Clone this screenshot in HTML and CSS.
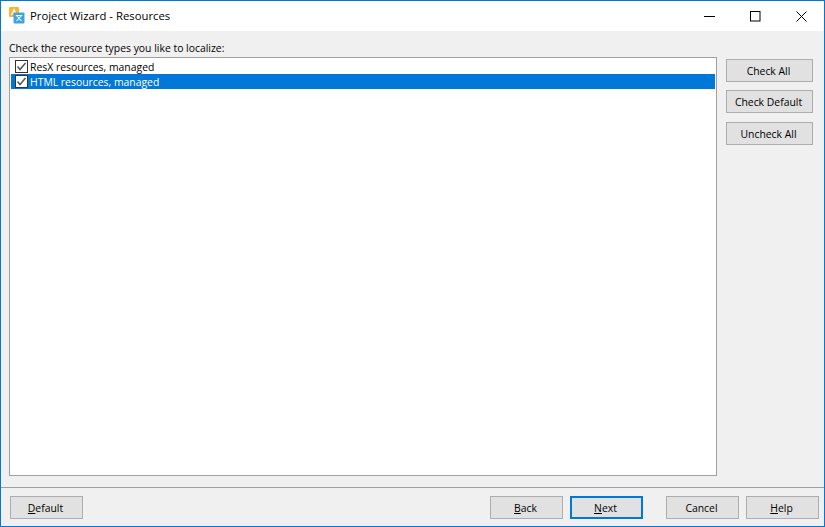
FILE: index.html
```html
<!DOCTYPE html>
<html lang="en">
<head>
<meta charset="utf-8">
<title>Project Wizard - Resources</title>
<link rel="stylesheet" href="styles.css">
</head>
<body>
<div class="window">
  <header class="titlebar">
    <svg class="app-icon" width="16" height="17" viewBox="0 0 16 17">
      <rect x="0" y="0" width="10" height="10" rx="1" fill="#f5b731"/>
      <path d="M2.5 8 L5 2.5 L7.5 8 M3.5 6 H6.5" fill="none" stroke="#fff" stroke-width="1.1"/>
      <rect x="4.5" y="5.5" width="11" height="11" rx="1" fill="#3fa3e8"/>
      <path d="M7.5 8.5 L12.5 14 M12.5 8.5 L7.5 14 M6.8 8.5 H13.2" fill="none" stroke="#fff" stroke-width="1.1"/>
    </svg>
    <span class="title">Project Wizard - Resources</span>
    <div class="caption">
      <span class="cap-btn"><svg width="11" height="11" viewBox="0 0 11 11"><path d="M0 5.5 H11" stroke="#000" stroke-width="1"/></svg></span>
      <span class="cap-btn"><svg width="11" height="11" viewBox="0 0 11 11"><rect x=".5" y=".5" width="9.5" height="9.5" fill="none" stroke="#000" stroke-width="1"/></svg></span>
      <span class="cap-btn"><svg width="11" height="11" viewBox="0 0 11 11"><path d="M.5 .5 L10.5 10.5 M10.5 .5 L.5 10.5" stroke="#000" stroke-width="1"/></svg></span>
    </div>
  </header>
  <main class="content">
    <p class="prompt">Check the resource types you like to localize:</p>
    <div class="body-row">
      <ul class="list">
        <li class="item">
          <svg class="check" width="13" height="13" viewBox="0 0 13 13"><rect x=".5" y=".5" width="12" height="12" fill="#fff" stroke="#333"/><path d="M2.5 6.5 L5 9.5 L10.5 3" fill="none" stroke="#555" stroke-width="1.5"/></svg>
          <span>ResX resources, managed</span>
        </li>
        <li class="item selected">
          <svg class="check" width="13" height="13" viewBox="0 0 13 13"><rect x=".5" y=".5" width="12" height="12" fill="#fff" stroke="#333"/><path d="M2.5 6.5 L5 9.5 L10.5 3" fill="none" stroke="#555" stroke-width="1.5"/></svg>
          <span>HTML resources, managed</span>
        </li>
      </ul>
      <div class="side">
        <button class="btn wide">Check All</button>
        <button class="btn wide">Check Default</button>
        <button class="btn wide">Uncheck All</button>
      </div>
    </div>
  </main>
  <footer class="footer">
    <button class="btn"><u>D</u>efault</button>
    <div class="nav">
      <button class="btn"><u>B</u>ack</button>
      <button class="btn primary"><u>N</u>ext</button>
    </div>
    <div class="end">
      <button class="btn">Cancel</button>
      <button class="btn"><u>H</u>elp</button>
    </div>
  </footer>
</div>
</body>
</html>
```
FILE: styles.css
```css
* { box-sizing: border-box; }
html, body { margin: 0; padding: 0; height: 100%; }
body { font-family: "Open Sans", "Noto Sans", sans-serif; font-size: 10.4px; color: #000; }
.window {
  width: 825px; height: 527px;
  border: 1px solid #0078d7;
  display: flex; flex-direction: column;
  background: #f0f0f0;
}
.titlebar {
  height: 30px; flex: none;
  background: #fff;
  display: flex; align-items: center;
  padding-left: 8px;
}
.app-icon { flex: none; margin-top: -1px; }
.title { margin-left: 5px; font-size: 11.33px; margin-top: -1px; }
.caption { margin-left: auto; display: flex; }
.cap-btn { width: 46px; height: 30px; display: flex; align-items: center; justify-content: center; }
.content { flex: 1; padding: 10px 8px 11px 8px; display: flex; flex-direction: column; min-height: 0; }
.prompt { margin: 0 0 2px; height: 14px; line-height: 14px; }
.body-row { flex: 1; display: flex; min-height: 0; }
.list {
  list-style: none; margin: 0; padding: 1px;
  width: 708px;
  background: #fff;
  border: 1px solid #a0a0a0;
}
.item { height: 15px; display: flex; align-items: center; padding-left: 4px; white-space: nowrap; }
.item .check { flex: none; margin-right: 2px; }
.item.selected { background: #0078d7; color: #fff; }
.side { margin-left: 9px; padding-top: 2px; display: flex; flex-direction: column; gap: 8px; }
.btn {
  width: 73px; height: 23px;
  background: #e1e1e1;
  border: 1px solid #adadad;
  font: inherit; color: #000;
  padding: 0 2px 0 0;
  display: block;
}
.btn.wide { width: 87px; }
.btn.primary { border: 2px solid #0078d7; }
.side .btn:last-child { margin-top: 1px; }
.footer {
  height: 39px; flex: none;
  border-top: 1px solid #a0a0a0;
  display: flex; align-items: flex-start;
  padding: 8px 5px 0 9px;
}
.nav { margin-left: auto; display: flex; gap: 7px; }
.end { margin-left: 23px; display: flex; gap: 7px; }
```
